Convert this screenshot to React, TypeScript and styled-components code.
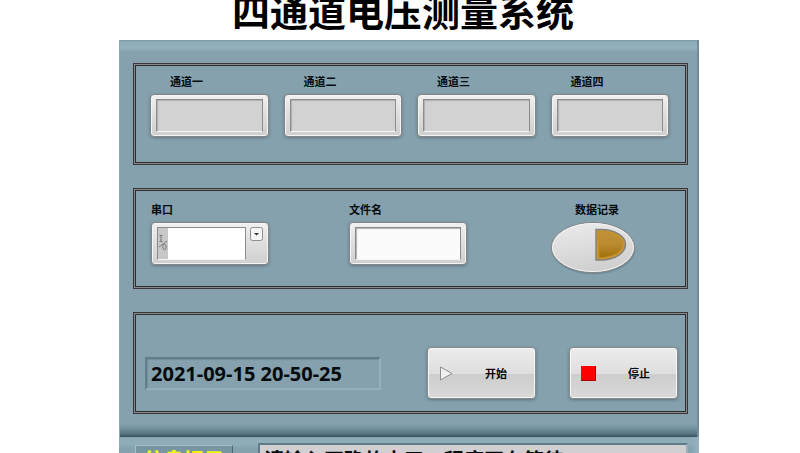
import React, { useState } from "react";
import styled, { createGlobalStyle } from "styled-components";

const GlobalStyle = createGlobalStyle`
  *, *::before, *::after { box-sizing: border-box; }
  body {
    margin: 0;
    background: #fff;
    color: #050a0d;
    font-family: "Noto Sans", "Noto Sans CJK SC", sans-serif;
    font-size: 11px;
    font-weight: 700;
  }
  button, input, select { font: inherit; color: inherit; margin: 0; }
`;

const Page = styled.div`
  height: 100vh;
  overflow: hidden;
  padding: 0 101px 0 119px;
`;

const Header = styled.header`
  height: 40px;
  display: flex;
  align-items: flex-end;
  justify-content: center;
  padding-right: 12px;
`;

const Title = styled.h1`
  margin: 0;
  font-family: "Noto Sans CJK SC", sans-serif;
  font-size: 38px;
  line-height: 60px;
  font-weight: 700;
  white-space: nowrap;
  color: #000;
`;

const Panel = styled.main`
  display: flex;
  flex-direction: column;
  gap: 23px;
  padding: 23px 11px 23px 14px;
  background:
    linear-gradient(#7898a4, #8fadb9 2px, #93b1bd 8px, #84a1ad 12px) top / 100% 12px no-repeat,
    linear-gradient(#84a1ad, #7593a0 4px, #56747f 10px, #3c5964 12px) bottom / 100% 13px no-repeat,
    #84a1ad;
  box-shadow: inset -2px 0 #6f8e9a, inset 1px 0 #8ba9b4;
`;

const Group = styled.section`
  border: 1px solid #3a3536;
  box-shadow: inset 0 0 0 1px #85898b, inset 0 0 0 2px #2e2e31;
`;

const ChannelGroup = styled(Group)`
  display: grid;
  grid-template-columns: repeat(4, minmax(0, 1fr));
  gap: 15px;
  padding: 10px 18px 27px 16px;
`;

const SettingsGroup = styled(Group)`
  display: grid;
  grid-template-columns: 198fr 202fr 84fr;
  padding: 13px 52px 15px 17px;
`;

const ActionGroup = styled(Group)`
  display: flex;
  align-items: center;
  justify-content: space-between;
  gap: 34px;
  padding: 34px 9px 14px 11px;
`;

const Field = styled.div`
  display: flex;
  flex-direction: column;
  gap: 4px;
`;

const Caption = styled.label<{ $indent?: number }>`
  font-size: 11px;
  line-height: 16px;
  padding-left: ${(p) => p.$indent ?? 0}px;
`;

const Bezel = styled.div<{ $fixed?: boolean }>`
  display: flex;
  width: ${(p) => (p.$fixed ? "118px" : "auto")};
  height: 43px;
  padding: 4px 5px;
  border: 1px solid #858585;
  border-radius: 4px;
  background: linear-gradient(#f0f0f0, #dedede 50%, #cfcfcf);
  box-shadow: inset 0 0 0 1px #f4f4f4, 0 1px 3px rgba(50, 70, 80, 0.45);
`;

const TextBox = styled.input<{ $tone: string }>`
  flex: 1;
  min-width: 0;
  padding: 0 4px;
  border: 1px solid #8b8b8b;
  border-bottom-color: #f5f5f5;
  border-radius: 0;
  outline: none;
  background: ${(p) => p.$tone};
  box-shadow: inset 1px 1px 1px #b0b0b0;
`;

const PortWell = styled.div`
  flex: 1;
  display: flex;
  min-width: 0;
  border: 1px solid #8b8b8b;
  border-bottom-color: #f5f5f5;
  background: #fff;
`;

const PortTag = styled.svg`
  width: 10px;
  height: 100%;
  background: #c8c8c8;
`;

const PortSelect = styled.select`
  flex: 1;
  min-width: 0;
  border: 0;
  outline: none;
  appearance: none;
  background: #fff;
`;

const DropMark = styled.svg`
  width: 13px;
  height: 14px;
  margin-left: 4px;
  flex: none;
`;

const RecordButton = styled.button`
  width: 84px;
  height: 51px;
  padding: 0;
  border: 0;
  background: none;
  cursor: pointer;

  svg { display: block; overflow: visible; }
`;

const Clock = styled.output`
  flex: 0 1 236px;
  padding: 0 4px;
  border: 2px solid;
  border-color: #617f8b #94b0bb #94b0bb #617f8b;
  box-shadow: inset 1px 1px 1px #708e99;
  font-family: "Noto Sans", sans-serif;
  font-size: 20px;
  line-height: 29px;
  white-space: nowrap;
`;

const Buttons = styled.div`
  display: flex;
  gap: 33px;
`;

const ActionButton = styled.button`
  display: flex;
  align-items: center;
  gap: 32px;
  width: 109px;
  height: 52px;
  padding: 0 11px;
  border: 1px solid #8a8a8a;
  border-radius: 4px;
  background: linear-gradient(#ececec, #dedede 52%, #cdcdcd 53%, #d9d9d9);
  box-shadow: inset 0 0 0 1px #f6f6f6, 0 1px 3px rgba(50, 70, 80, 0.5);
  white-space: nowrap;
  cursor: pointer;
`;

const Footer = styled.footer`
  display: flex;
  align-items: flex-start;
  gap: 25px;
  padding: 6px 11px 12px 16px;
  background: linear-gradient(#83a2ae, #8fadb9 2px, #8fadb9 7px, #84a2ae 12px);
  box-shadow: inset -9px 0 4px -4px #93b1bd;
`;

const NoticeLabel = styled.strong`
  width: 98px;
  margin-top: 2px;
  border: 1px solid;
  border-color: #a3bec8 #4d6671 #4d6671 #a3bec8;
  background: #7896a2;
  font-family: "Noto Sans CJK SC", sans-serif;
  font-size: 20px;
  line-height: 28px;
  text-align: center;
  color: #f5f50a;
`;

const Notice = styled.p`
  flex: 1;
  margin: 0;
  padding: 0 4px;
  border: 2px solid;
  border-color: #5f7d89 #94b0bb #94b0bb #5f7d89;
  background: #d1cfd2;
  font-family: "Noto Sans CJK SC", sans-serif;
  font-size: 20px;
  line-height: 30px;
  white-space: nowrap;
  overflow: hidden;
`;

const channels = ["通道一", "通道二", "通道三", "通道四"];

export default function App() {
  const [recording, setRecording] = useState(false);

  return (
    <>
      <GlobalStyle />
      <Page>
        <Header>
          <Title>四通道电压测量系统</Title>
        </Header>
        <Panel>
          <ChannelGroup>
            {channels.map((name, i) => (
              <Field key={name}>
                <Caption $indent={20} htmlFor={`channel-${i}`}>{name}</Caption>
                <Bezel>
                  <TextBox id={`channel-${i}`} $tone="#d2d2d2" readOnly />
                </Bezel>
              </Field>
            ))}
          </ChannelGroup>

          <SettingsGroup>
            <Field>
              <Caption htmlFor="port">串口</Caption>
              <Bezel $fixed>
                <PortWell>
                  <PortTag viewBox="0 0 10 31" fill="none" stroke="#777" aria-hidden="true">
                    <path d="M1.5 7.5h3M3 7.5v6M1.5 13.5h3M1 19l8-6" />
                    <ellipse cx="6.5" cy="19" rx="1.7" ry="2.8" />
                  </PortTag>
                  <PortSelect id="port" />
                </PortWell>
                <DropMark viewBox="0 0 13 14" aria-hidden="true">
                  <rect x="0.5" y="0.5" width="12" height="13" rx="2" fill="#f5f5f5" stroke="#8c8c8c" />
                  <path d="M4 6h5L6.5 8.5z" fill="#333" />
                </DropMark>
              </Bezel>
            </Field>
            <Field>
              <Caption htmlFor="file">文件名</Caption>
              <Bezel $fixed>
                <TextBox id="file" $tone="#fbfbfb" />
              </Bezel>
            </Field>
            <Field>
              <Caption $indent={24} htmlFor="record">数据记录</Caption>
              <RecordButton
                id="record"
                type="button"
                aria-pressed={recording}
                onClick={() => setRecording(!recording)}
              >
                <svg width="84" height="51" viewBox="0 0 84 51" aria-hidden="true">
                  <defs>
                    <linearGradient id="shell" x1="0" y1="0" x2="0.3" y2="1">
                      <stop offset="0" stopColor="#ececec" />
                      <stop offset="1" stopColor="#d0d0d0" />
                    </linearGradient>
                    <linearGradient id="lamp" x1="0" y1="0" x2="0" y2="1">
                      <stop offset="0" stopColor={recording ? "#ffd75a" : "#c0913a"} />
                      <stop offset="0.5" stopColor={recording ? "#ffc933" : "#ba8a30"} />
                      <stop offset="1" stopColor={recording ? "#f5b400" : "#a06f08"} />
                    </linearGradient>
                  </defs>
                  <ellipse cx="42.5" cy="27" rx="42" ry="25.5" fill="#5d7884" opacity="0.5" />
                  <ellipse cx="42" cy="25.5" rx="41.5" ry="25" fill="url(#shell)" stroke="#828282" />
                  <ellipse cx="42" cy="25.5" rx="40.5" ry="24" fill="none" stroke="#f3f3f3" />
                  <path d="M45 7.500h5C65 7.500 74.500 15 74.500 22.500S65 38 50 38H45z" fill="#c9963a" stroke="#85827b" strokeWidth="1.5" />
                  <path d="M47 9.500h3C63 9.500 72 16 72 22.500S64 35 48 36z" fill="url(#lamp)" stroke="#c68f24" />
                </svg>
              </RecordButton>
            </Field>
          </SettingsGroup>

          <ActionGroup>
            <Clock>2021-09-15 20-50-25</Clock>
            <Buttons>
              <ActionButton type="button">
                <svg width="14" height="15" viewBox="0 0 14 15" aria-hidden="true">
                  <path d="M1.5 1L13 7.5L1.5 14z" fill="#f0f0f0" stroke="#8d8d8d" strokeLinejoin="round" />
                </svg>
                开始
              </ActionButton>
              <ActionButton type="button">
                <svg width="15" height="15" viewBox="0 0 15 15" aria-hidden="true">
                  <rect width="15" height="15" fill="#fe0000" />
                  <path d="M0 14.5h14.5V0" fill="none" stroke="#a80000" />
                </svg>
                停止
              </ActionButton>
            </Buttons>
          </ActionGroup>
        </Panel>
        <Footer>
          <NoticeLabel>信息提示</NoticeLabel>
          <Notice>请输入正确的串口，程序正在等待</Notice>
        </Footer>
      </Page>
    </>
  );
}
